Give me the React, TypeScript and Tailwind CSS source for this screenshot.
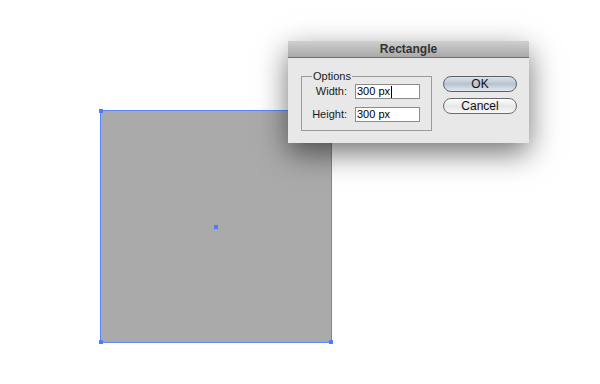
import React from "react";

export default function App() {
  const font = { fontFamily: '"Liberation Sans", Arial, sans-serif' };
  return (
    <div className="relative w-[600px] h-[384px] bg-white overflow-hidden" style={font}>
      {/* Rectangle selection on canvas */}
      <div className="absolute left-[100px] top-[110px] w-[232px] h-[233px] bg-[#aaaaaa] border border-[#5b86ff] flex items-center justify-center">
        <div className="absolute -left-[2px] -top-[2px] w-[4px] h-[4px] bg-[#4d7cff]" />
        <div className="absolute -right-[2px] -top-[2px] w-[4px] h-[4px] bg-[#4d7cff]" />
        <div className="absolute -left-[2px] -bottom-[2px] w-[4px] h-[4px] bg-[#4d7cff]" />
        <div className="absolute -right-[2px] -bottom-[2px] w-[4px] h-[4px] bg-[#4d7cff]" />
        <div className="w-[4px] h-[4px] bg-[#4d7cff]" />
      </div>

      {/* Dialog */}
      <div className="absolute left-[288px] top-[41px] w-[241px] h-[102px] bg-[#e8e8e8] shadow-[0_10px_28px_rgba(0,0,0,0.55)] flex flex-col">
        <div className="h-[17px] bg-gradient-to-b from-[#cfcfcf] to-[#a9a9a9] border-b border-[#6e6e6e] flex items-center justify-center text-[12px] font-bold text-[#333] leading-none">
          Rectangle
        </div>
        <div className="flex-1 flex items-start pt-[18px] pl-[13px] pr-[12px] gap-[11px]">
          {/* Group box */}
          <fieldset className="w-[131px] h-[55px] border border-[#9a9a9a] -mt-[0px] relative">
            <span className="absolute left-[10px] -top-[8px] px-[1px] bg-[#e8e8e8] text-[11px] leading-[14px] text-[#1a1a1a]">
              Options
            </span>
            <div className="pt-[7px] flex flex-col gap-[8px]">
              <div className="flex items-center gap-[8px] h-[15px]">
                <span className="w-[45px] text-right text-[11px] text-[#1a1a1a]">Width:</span>
                <div className="w-[65px] h-[15px] bg-white border border-[#8c8c8c] flex items-center pl-[1px] text-[11px] text-black leading-none">
                  300 px<span className="inline-block w-[1px] h-[12px] bg-black ml-[1px]" />
                </div>
              </div>
              <div className="flex items-center gap-[8px] h-[15px]">
                <span className="w-[45px] text-right text-[11px] text-[#1a1a1a]">Height:</span>
                <div className="w-[65px] h-[15px] bg-white border border-[#8c8c8c] flex items-center pl-[1px] text-[11px] text-black leading-none">
                  300 px
                </div>
              </div>
            </div>
          </fieldset>
          {/* Buttons */}
          <div className="w-[74px] flex flex-col gap-[6px]">
            <div className="h-[16px] rounded-full border border-[#5c6068] bg-gradient-to-b from-[#dde3ea] via-[#b8c2cf] to-[#e3e9f0] flex items-center justify-center text-[12px] text-[#111] leading-none">
              OK
            </div>
            <div className="h-[16px] rounded-full border border-[#6a6a6a] bg-gradient-to-b from-[#ffffff] via-[#e6e6e6] to-[#f8f8f8] flex items-center justify-center text-[12px] text-[#111] leading-none">
              Cancel
            </div>
          </div>
        </div>
      </div>
    </div>
  );
}
